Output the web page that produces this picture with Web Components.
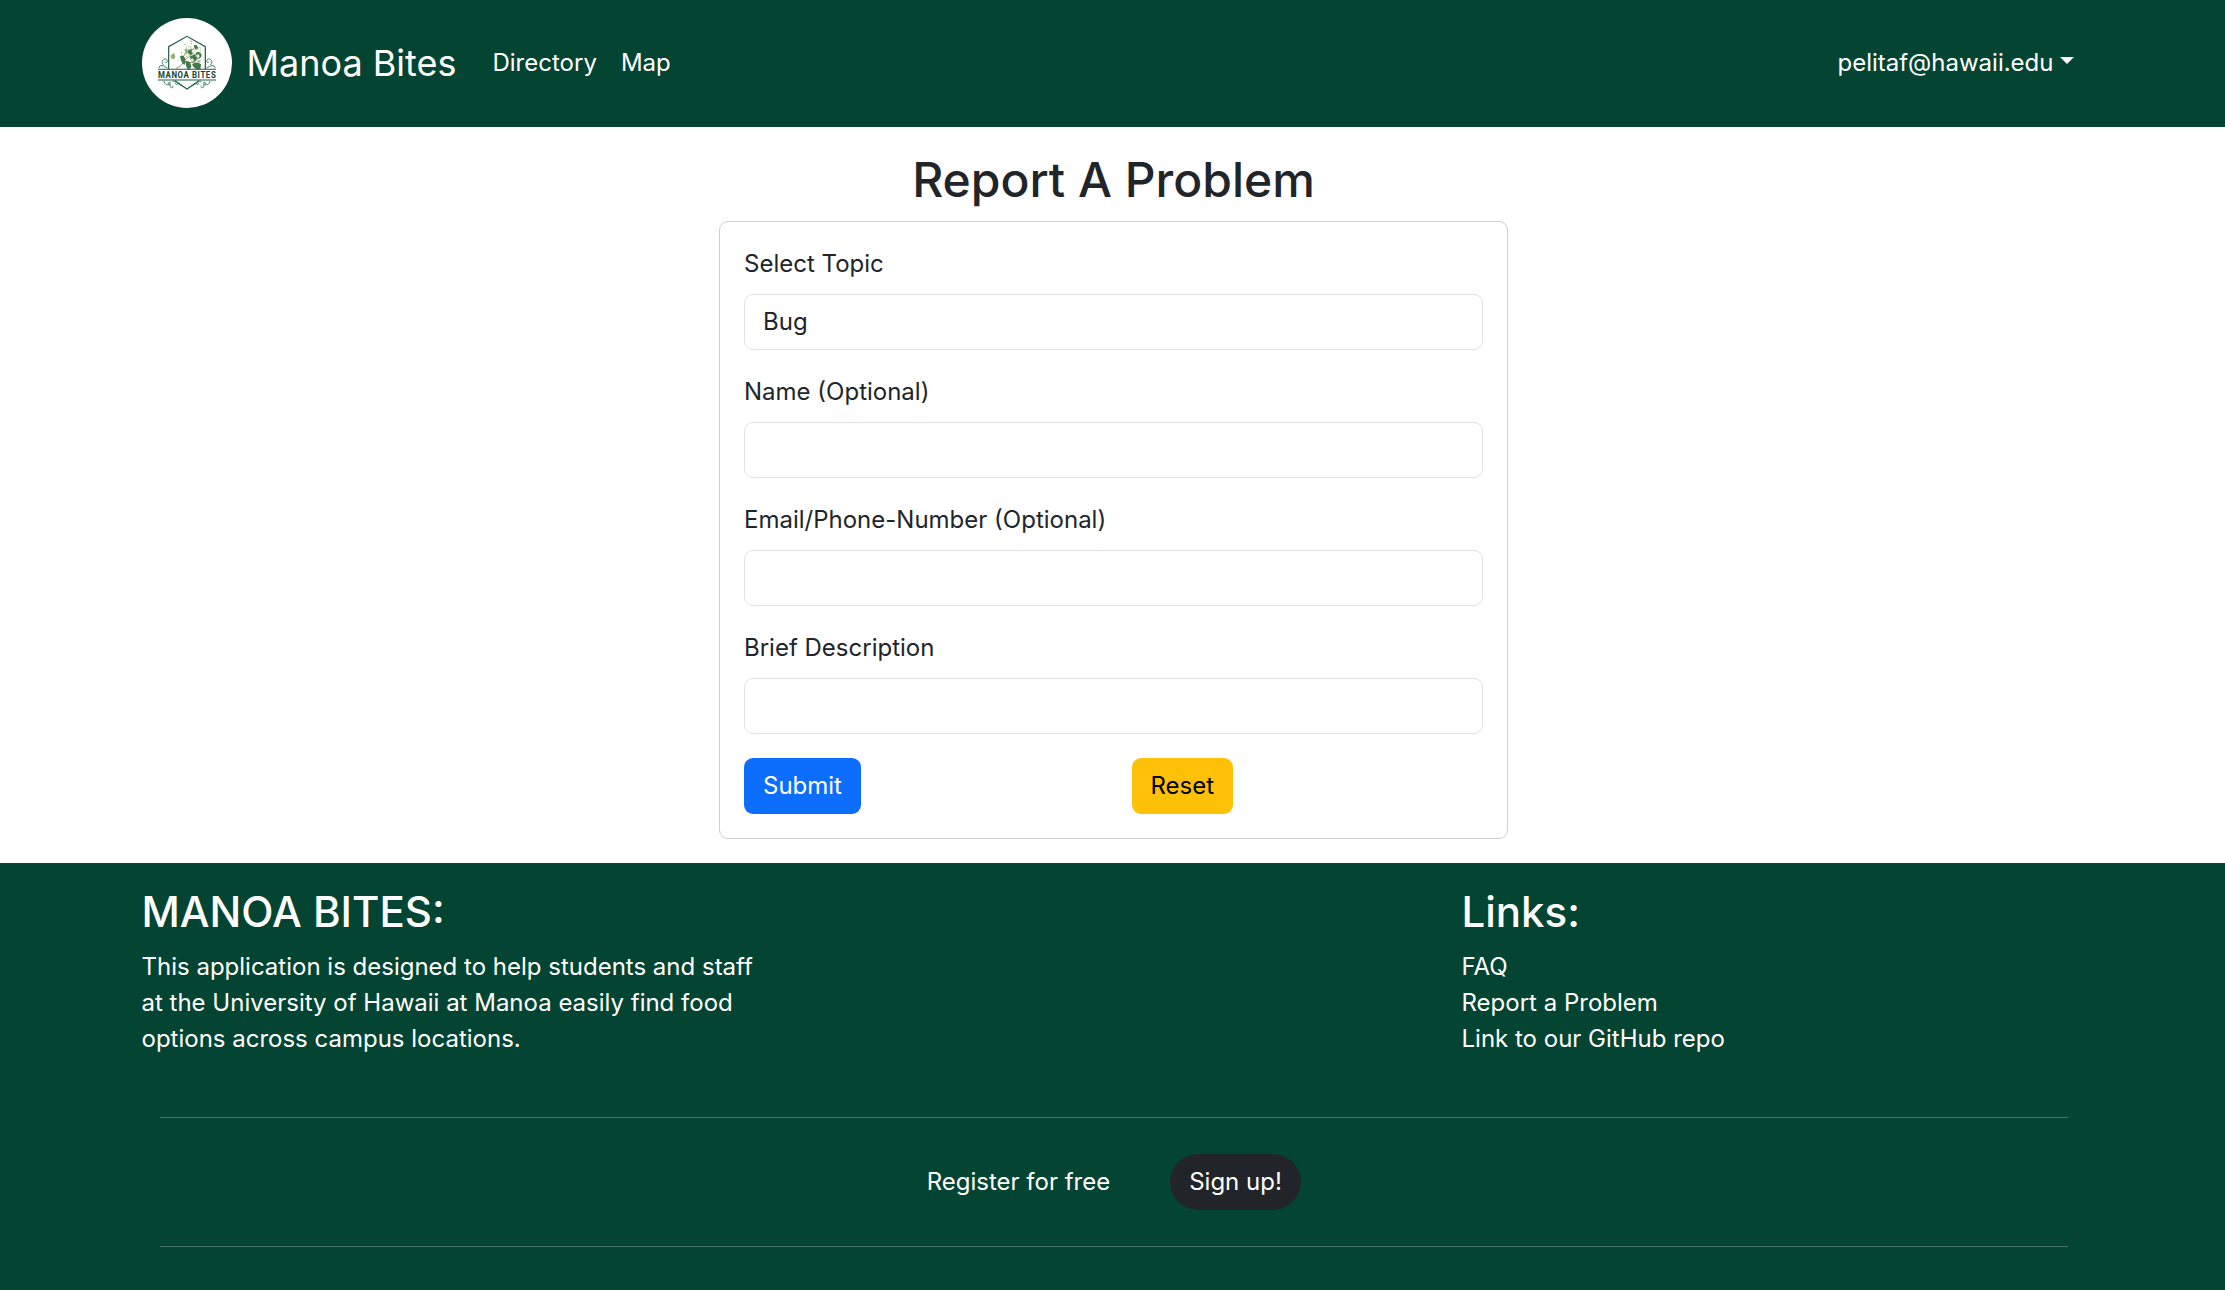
<!DOCTYPE html>
<html lang="en">
<head>
<meta charset="utf-8">
<title>Manoa Bites</title>
<style>
html,body{margin:0;height:100%}
body{font:400 24px/36px Inter,"Liberation Sans",sans-serif;color:#212529;background:#fff;overflow:hidden}
</style>
</head>
<body>
<mb-app></mb-app>
<script>
const define = (name, html) => {
  const template = document.createElement('template');
  template.innerHTML = html;
  customElements.define(name, class extends HTMLElement {
    constructor() {
      super();
      this.attachShadow({mode: 'open'}).append(template.content.cloneNode(true));
    }
  });
};

define('mb-logo', `
<style>:host{display:block;width:90px;height:90px;flex:none}svg{display:block}</style>
<svg width="90" height="90" viewBox="18 18 270 270" fill="none" stroke-linecap="round">
  <circle cx="153" cy="153" r="135" fill="#fff"/>
  <g stroke="#1f5c49" stroke-width="3.6">
    <path d="M98 170V104L153 73L208 104V170"/>
    <path d="M67 172H239M67 204H239" stroke-width="3.2"/>
    <path d="M118 207L153 231L188 207"/>
  </g>
  <g stroke="#34705d" stroke-width="2.8">
    <path d="M69 167C70 156 84 161 94 168M82 158C72 148 84 137 91 142C98 149 91 155 87 150"/>
    <path d="M237 167C236 156 222 161 212 168M224 158C234 148 222 137 215 142C208 149 215 155 219 150"/>
    <path d="M84 208C87 222 102 221 103 212C98 208 94 216 99 218M103 218C99 231 114 229 111 222M110 209C118 205 127 210 125 216C119 220 115 214 120 211M125 214L138 222"/>
    <path d="M222 208C219 222 204 221 203 212C208 208 212 216 207 218M203 218C207 231 192 229 195 222M196 209C188 205 179 210 181 216C187 220 191 214 186 211M181 214L168 222"/>
  </g>
  <path d="M121 169C134 165 139 157 145 145M145 146L166 128M145 150L178 153M139 139L151 119M163 126L177 103" stroke="#947451" stroke-width="2.5"/>
  <g fill="#41784c">
    <path d="M132 132Q143 127 148 140Q151 151 145 159Q134 151 132 132Z"/>
    <path d="M150 147Q164 144 166 165L158 175Q147 165 150 147Z"/>
    <path d="M168 158Q181 145 195 157L193 174Q178 175 168 158Z"/>
    <path d="M154 119Q160 105 173 113Q176 121 166 129Q157 128 154 119Z"/>
    <path d="M181 121Q195 116 197 132Q191 145 179 139Q176 130 181 121Z"/>
    <path d="M161 134L176 126L183 143L170 153Z"/>
    <path d="M173 100L181 98L187 108L179 114Z"/>
  </g>
  <g fill="#8eb679"><path d="M103 131L110 126L114 122L118 133L115 142L107 141Z"/><path d="M145 112L153 109L157 120L150 126Z"/><path d="M181 146L195 144L190 153Z"/></g>
  <g fill="#f4f4e2" stroke="#a5bd92" stroke-width="1.3">
    <path d="M151 128L156 124L160 129L157 136L152 134Z"/><path d="M167 116L173 110L178 118L174 125L169 122Z"/><path d="M181 130L187 126L191 132L187 139L182 136Z"/><path d="M187 107L192 105L195 117L190 121L185 114Z"/><path d="M164 142L170 139L174 146L169 150Z"/><path d="M159 103L166 104L165 113L159 112Z"/>
  </g>
  <g fill="#79a668"><circle cx="147" cy="98" r="2"/><circle cx="165" cy="88" r="2.3"/><circle cx="151" cy="105" r="1.6"/><circle cx="166" cy="95" r="1.8"/><circle cx="137" cy="122" r="1.7"/><circle cx="126" cy="144" r="1.6"/></g>
  <text x="66" y="197" textLength="175" lengthAdjust="spacingAndGlyphs" fill="#0f4435" font-family="Roboto" font-size="27" font-weight="700" letter-spacing="2">MANOA BITES</text>
</svg>`);

define('mb-navbar', `
<style>
:host{display:flex;align-items:center;box-sizing:border-box;height:127px;padding:0 151px 2px 142px;background:#044432;color:#fff}
.brand{font-size:36px;line-height:54px;margin-left:14.5px;white-space:nowrap}
nav{display:flex;gap:24px;margin-left:36px}
.user{margin-left:auto;display:flex;align-items:center}
.caret{border:7.2px solid transparent;border-top-color:#fff;border-bottom:0;margin:-5px 0 0 6.5px}
</style>
<mb-logo></mb-logo><span class="brand">Manoa Bites</span>
<nav><span>Directory</span><span>Map</span></nav>
<span class="user">pelitaf@hawaii.edu<i class="caret"></i></span>`);

define('mb-field', `
<style>
:host{display:block;margin-bottom:24px}
label{display:block;margin-bottom:12px}
.control{box-sizing:border-box;height:56px;border:1px solid #dee2e6;border-radius:9px;padding:9px 18px;background:#fff}
</style>
<label><slot name="label"></slot></label><div class="control"><slot></slot></div>`);

define('mb-button', `
<style>
:host{display:inline-block;box-sizing:border-box;height:56px;padding:10px var(--pad,19px);border-radius:var(--radius,9px);background:var(--bg);color:var(--fg,#fff);white-space:nowrap}
</style><slot></slot>`);

define('mb-report', `
<style>
:host{display:block;box-sizing:border-box;height:736px;padding:24px 717px 24px 719px}
h2{margin:0 0 12px;font-weight:500;font-size:48px;line-height:58px;text-align:center}
.card{box-sizing:border-box;height:618px;border:1px solid #ced0d3;border-radius:9px;padding:24px}
.actions{display:grid;grid-template-columns:388px 1fr;justify-items:start}
.submit{--bg:#0d6efd}.reset{--bg:#ffc107;--fg:#000;--pad:18.5px}
</style>
<h2>Report A Problem</h2>
<div class="card">
<mb-field><span slot="label">Select Topic</span>Bug</mb-field>
<mb-field><span slot="label">Name (Optional)</span></mb-field>
<mb-field><span slot="label">Email/Phone-Number (Optional)</span></mb-field>
<mb-field><span slot="label">Brief Description</span></mb-field>
<div class="actions"><mb-button class="submit">Submit</mb-button><mb-button class="reset">Reset</mb-button></div>
</div>`);

define('mb-footer', `
<style>
:host{display:block;box-sizing:border-box;height:427px;padding:24px 139px 0 141.5px;background:#044432;color:#fff}
.cols{display:grid;grid-template-columns:624px 624px;column-gap:696px;height:230px;box-sizing:border-box}
h3{margin:0 0 12px;font-weight:500;font-size:42px;line-height:50px}
p{margin:0}
.links{display:flex;flex-direction:column}
.rule{height:1px;margin:0 18px 0 18.5px;background:#437366}
.register{height:128px;display:flex;align-items:center;justify-content:center;gap:60px}
mb-button{--bg:#212529;--radius:28px}
</style>
<div class="cols">
<section><h3>MANOA BITES:</h3><p>This application is designed to help students and staff at the University of Hawaii at Manoa easily find food options across campus locations.</p></section>
<section class="links"><h3>Links:</h3><span>FAQ</span><span>Report a Problem</span><span>Link to our GitHub repo</span></section>
</div>
<div class="rule"></div>
<div class="register"><span>Register for free</span><mb-button>Sign up!</mb-button></div>
<div class="rule"></div>`);

define('mb-app', `
<style>:host{display:flex;flex-direction:column}</style>
<mb-navbar></mb-navbar><mb-report></mb-report><mb-footer></mb-footer>`);
</script>
</body>
</html>
